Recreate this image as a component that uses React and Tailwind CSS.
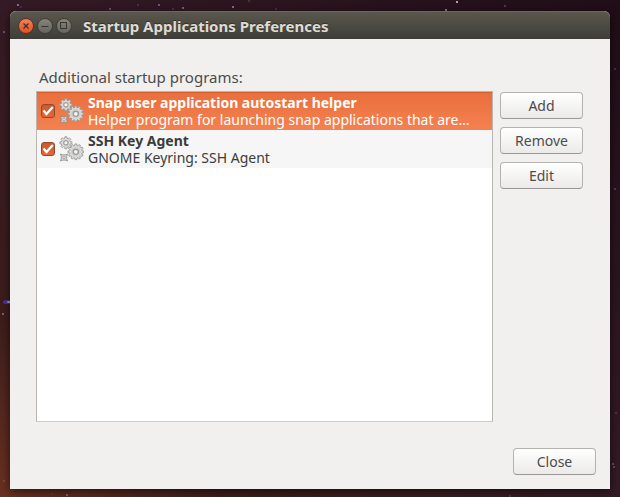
import React, { useState } from 'react'

const programs = [
  {
    id: 'snap-autostart',
    name: 'Snap user application autostart helper',
    description: 'Helper program for launching snap applications that are…',
  },
  {
    id: 'ssh-agent',
    name: 'SSH Key Agent',
    description: 'GNOME Keyring: SSH Agent',
  },
]

const stars = [
  { x: 18, y: 5, r: 1.1, color: '#8f83bd' },
  { x: 21, y: 7, r: 0.7, color: '#6a5c94' },
  { x: 4, y: 32, r: 1, color: '#7d6480' },
  { x: 110, y: 9, r: 0.8, color: '#a994b8' },
  { x: 138, y: 5, r: 0.8, color: '#6b5378' },
  { x: 159, y: 5, r: 0.9, color: '#8276b8' },
  { x: 173, y: 9, r: 0.8, color: '#6b5378' },
  { x: 183, y: 8, r: 0.9, color: '#8c84c8' },
  { x: 233, y: 7, r: 1, color: '#a48aa8' },
  { x: 249, y: 1, r: 0.8, color: '#6b5378' },
  { x: 276, y: 9, r: 0.8, color: '#6b5378' },
  { x: 446, y: 10, r: 0.9, color: '#b9a9c4' },
  { x: 457, y: 2, r: 1.1, color: '#cdbfe0' },
  { x: 505, y: 6, r: 1, color: '#5c3f80' },
  { x: 615, y: 69, r: 0.9, color: '#4f3f66' },
  { x: 615, y: 189, r: 1, color: '#5f4a63' },
  { x: 616, y: 413, r: 0.8, color: '#7a5a60' },
  { x: 613, y: 464, r: 0.8, color: '#a58c90' },
  { x: 614, y: 467, r: 0.8, color: '#a58c90' },
  { x: 3, y: 314, r: 0.9, color: '#a67b98' },
  { x: 4, y: 481, r: 0.9, color: '#8a4d43' },
  { x: 52, y: 494, r: 0.8, color: '#6f4640' },
  { x: 67, y: 495, r: 0.9, color: '#a08276' },
  { x: 510, y: 496, r: 0.8, color: '#7a5a60' },
]

// Outline of a cog wheel with square teeth
const cog = (cx, cy, outer, inner, teeth) => {
  const step = (Math.PI * 2) / teeth
  const points = []
  for (let i = 0; i < teeth; i++) {
    const a = i * step - Math.PI / 2
    const corners = [
      [inner, -0.32],
      [outer, -0.22],
      [outer, 0.22],
      [inner, 0.32],
    ]
    corners.forEach(([r, offset]) => {
      points.push(`${cx + r * Math.cos(a + offset * step)},${cy + r * Math.sin(a + offset * step)}`)
    })
  }
  return points.join(' ')
}

const Stars = () => (
  <svg className="absolute inset-0 w-full h-full" aria-hidden="true">
    {stars.map((s) => (
      <circle key={`${s.x}-${s.y}`} cx={s.x} cy={s.y} r={s.r} fill={s.color} />
    ))}
    <ellipse cx="7" cy="302" rx="4" ry="2" fill="#4a36a0" />
    <ellipse cx="9" cy="302" rx="2" ry="1" fill="#b3a5dc" />
  </svg>
)

const GearsIcon = () => (
  <svg className="w-[25px] h-[26px] shrink-0" viewBox="0 0 25 26" aria-hidden="true">
    <g fill="#dcdcda" stroke="#9b9b98" strokeWidth="0.9" strokeLinejoin="round">
      <polygon points={cog(6.9, 6.8, 6.1, 4.6, 8)} />
      <circle cx="6.9" cy="6.8" r="2.2" fill="#f4f4f3" stroke="#a2a29f" strokeWidth="1.3" />
      <path d="M1.500 18l2.300.9h2.400l2.300-.9-.8 2.300v2.400l.8 2.300-2.300-.9H3.800l-2.300.9.8-2.300v-2.400z" stroke="#8e8e8b" />
      <circle cx="5" cy="21.500" r="1.200" fill="#f4f4f3" />
      <polygon points={cog(16.800, 15.800, 7.900, 6.300, 12)} />
      <circle cx="16.800" cy="15.800" r="4.300" fill="none" stroke="#cacac7" />
      <circle cx="16.800" cy="15.800" r="2.600" fill="#f4f4f3" stroke="#9b9b98" strokeWidth="1.400" />
    </g>
  </svg>
)

const WindowButton = ({ label, className, children }) => (
  <button
    type="button"
    aria-label={label}
    className={`w-4 h-4 rounded-full border shrink-0 ${className}`}
  >
    <svg className="w-full h-full" viewBox="0 0 14 14" fill="none" stroke="#35342f" strokeWidth="1">
      {children}
    </svg>
  </button>
)

const Button = ({ children }) => (
  <button
    type="button"
    className="w-[83px] h-[27px] rounded border border-[#b5b3af] border-b-[#9a9894] bg-linear-to-b from-white to-[#ebeae8] text-[#4c4c4c] text-sm leading-5"
  >
    {children}
  </button>
)

const ProgramRow = ({ program, selected, onSelect }) => {
  const [enabled, setEnabled] = useState(true)

  return (
    <li
      onClick={onSelect}
      className={`flex items-center h-[38px] px-1 ${
        selected
          ? 'bg-linear-to-b from-[#e96e3c] to-[#f58150] text-white shadow-[inset_0_1px_0_#d8602f]'
          : 'bg-[#f6f6f6] text-[#3c3c3c]'
      }`}
    >
      <span className="grid shrink-0 mr-1">
        <input
          type="checkbox"
          id={program.id}
          checked={enabled}
          onChange={() => setEnabled(!enabled)}
          className="col-start-1 row-start-1 appearance-none w-[14px] h-[14px] rounded-[3px] border border-[#8e4a2b] bg-linear-to-b from-[#c95a30] to-[#e5683a]"
        />
        {enabled && (
          <svg
            className="col-start-1 row-start-1 w-[14px] h-[14px] pointer-events-none"
            viewBox="0 0 14 14"
            fill="none"
            stroke="white"
            strokeWidth="2.2"
          >
            <path d="M2.500 6.500l3 3.500L11.800 3" />
          </svg>
        )}
      </span>
      <GearsIcon />
      <label htmlFor={program.id} className="min-w-0 flex-1 ml-1 text-sm leading-[17px]">
        <span className="block whitespace-nowrap font-bold">{program.name}</span>
        <span className="block whitespace-nowrap">{program.description}</span>
      </label>
    </li>
  )
}

const App = () => {
  const [selected, setSelected] = useState('snap-autostart')

  return (
    <div className="relative min-h-screen flex flex-col px-[10px] pt-[11px] pb-2 bg-[linear-gradient(to_top_right,#6a3020_0%,#3d1d1b_18%,#341a25_50%,#200d17_100%)] font-['Noto_Sans',sans-serif]">
      <Stars />
      <div className="relative flex-1 flex flex-col rounded-t-md bg-[#f1f0ee] shadow-[0_2px_8px_rgba(0,0,0,0.6)]">
        <header className="h-7 flex items-center gap-[3px] px-2 rounded-t-md border-t border-[#6b695f] bg-linear-to-b from-[#5a584d] to-[#3e3d38]">
          <WindowButton label="Close window" className="border-[#57332a] bg-linear-to-b from-[#f58058] to-[#e2501d]">
            <path d="M4.500 4.500l5 5M9.500 4.500l-5 5" strokeWidth="1.300" />
          </WindowButton>
          <WindowButton label="Minimize" className="border-[#3d3c36] bg-linear-to-b from-[#86857d] to-[#66655e]">
            <path d="M3.500 7.500h7" />
          </WindowButton>
          <WindowButton label="Maximize" className="border-[#3d3c36] bg-linear-to-b from-[#86857d] to-[#66655e]">
            <rect x="3.500" y="3.500" width="6" height="6" />
          </WindowButton>
          <h1 className="ml-2 text-[15px] leading-5 font-bold text-[#dfdbd2] [text-shadow:0_-1px_0_#33322d]">
            Startup Applications Preferences
          </h1>
        </header>

        <main className="flex-1 flex flex-col pt-7 pb-[14px]">
          <h2 id="programs-label" className="pl-[29px] mb-1 text-[15px] leading-5 text-[#4c4c4c]">
            Additional startup programs:
          </h2>

          <div className="flex-1 flex gap-[7px] pl-[26px] pr-[27px]">
            <ul
              aria-labelledby="programs-label"
              className="flex-1 min-w-0 bg-white border border-[#b8b6b0] border-b-[#cfcdc9]"
            >
              {programs.map((program) => (
                <ProgramRow
                  key={program.id}
                  program={program}
                  selected={selected === program.id}
                  onSelect={() => setSelected(program.id)}
                />
              ))}
            </ul>
            <div className="flex flex-col gap-2 pt-px">
              <Button>Add</Button>
              <Button>Remove</Button>
              <Button>Edit</Button>
            </div>
          </div>

          <div className="flex justify-end mt-[26px] pr-[14px]">
            <Button>Close</Button>
          </div>
        </main>
      </div>
    </div>
  )
}

export default App
